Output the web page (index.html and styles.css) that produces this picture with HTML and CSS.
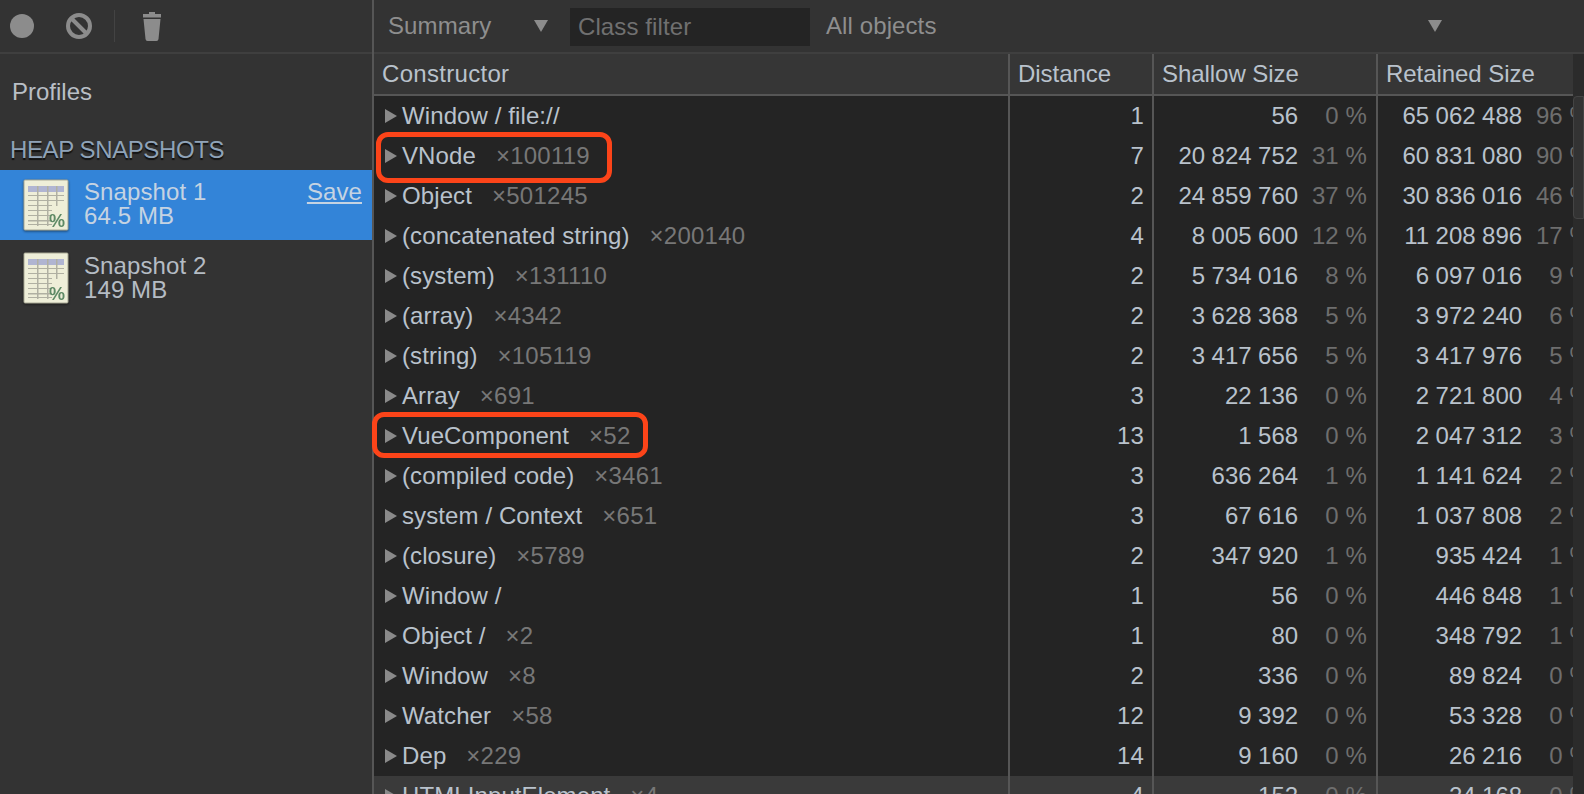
FILE: index.html
```html
<!DOCTYPE html>
<html lang="en">
<head>
<meta charset="utf-8">
<title>Profiles</title>
<link rel="stylesheet" href="styles.css">
</head>
<body>
<svg class="defs" width="0" height="0" aria-hidden="true">
  <defs>
    <symbol id="sheet" viewBox="0 0 46 52">
      <rect x="1" y="1" width="44" height="50" rx="1" fill="#eeeed8" stroke="#a9a995" stroke-width="1"/>
      <rect x="5" y="7" width="36" height="6" fill="#b0b5d2"/>
      <g fill="#b0b0a2">
        <rect x="5" y="16" width="36" height="1"/><rect x="5" y="21" width="36" height="1"/><rect x="5" y="26" width="24" height="1"/>
        <rect x="5" y="31" width="24" height="1"/><rect x="5" y="36" width="24" height="1"/><rect x="5" y="41" width="24" height="1.5"/>
        <rect x="5" y="45" width="24" height="1"/>
        <rect x="14" y="7" width="1.5" height="40"/><rect x="24" y="7" width="1.5" height="40"/><rect x="33" y="7" width="1.500" height="20"/>
      </g>
      <text x="34" y="48" text-anchor="middle" class="pct-glyph">%</text>
    </symbol>
  </defs>
</svg>
<div class="app">
  <aside class="sidebar">
    <div class="side-toolbar">
      <svg class="rec" width="24" height="24" viewBox="0 0 24 24"><circle cx="12" cy="12" r="12" fill="#8c8c8c"/></svg>
      <svg class="clear" width="26" height="26" viewBox="0 0 26 26"><circle cx="13" cy="13" r="11" fill="none" stroke="#8c8c8c" stroke-width="4"/><path d="M5.500 5.500L20.500 20.500" stroke="#8c8c8c" stroke-width="4"/></svg>
      <span class="tool-sep"></span>
      <svg class="trash" width="20" height="29" viewBox="0 0 20 29"><path d="M7 0h6v2h6v3.500H1V2h6z" fill="#8c8c8c"/><path d="M1.500 7h17l-2 20q-.2 2-2 2h-9q-1.800 0-2-2z" fill="#8c8c8c"/></svg>
    </div>
    <div class="profiles">Profiles</div>
    <div class="group">HEAP SNAPSHOTS</div>
    <div class="snap snap-on">
      <svg class="sheet" width="46" height="52"><use href="#sheet"/></svg>
      <div class="snap-text"><div>Snapshot 1</div><div>64.5 MB</div></div>
      <a class="save">Save</a>
    </div>
    <div class="snap">
      <svg class="sheet" width="46" height="52"><use href="#sheet"/></svg>
      <div class="snap-text"><div>Snapshot 2</div><div>149 MB</div></div>
    </div>
  </aside>
  <main class="main">
    <div class="filterbar">
      <span class="sel-summary">Summary</span>
      <span class="tri tri-a"></span>
      <span class="filter">Class filter</span>
      <span class="sel-all">All objects</span>
      <span class="tri"></span>
    </div>
    <div class="body">
      <div class="table">
        <div class="row head">
          <div class="c-name">Constructor</div>
          <div class="c-dist">Distance</div>
          <div class="c-shal">Shallow Size</div>
          <div class="c-ret">Retained Size</div>
        </div>
        <div class="row"><div class="c-name"><i></i>Window / file://</div><div class="c-dist">1</div><div class="c-shal"><b>56</b><em>0 %</em></div><div class="c-ret"><b>65 062 488</b><em>96 %</em></div></div>
        <div class="row"><div class="c-name"><i></i>VNode<span>×100119</span></div><div class="c-dist">7</div><div class="c-shal"><b>20 824 752</b><em>31 %</em></div><div class="c-ret"><b>60 831 080</b><em>90 %</em></div></div>
        <div class="row"><div class="c-name"><i></i>Object<span>×501245</span></div><div class="c-dist">2</div><div class="c-shal"><b>24 859 760</b><em>37 %</em></div><div class="c-ret"><b>30 836 016</b><em>46 %</em></div></div>
        <div class="row"><div class="c-name"><i></i>(concatenated string)<span>×200140</span></div><div class="c-dist">4</div><div class="c-shal"><b>8 005 600</b><em>12 %</em></div><div class="c-ret"><b>11 208 896</b><em>17 %</em></div></div>
        <div class="row"><div class="c-name"><i></i>(system)<span>×131110</span></div><div class="c-dist">2</div><div class="c-shal"><b>5 734 016</b><em>8 %</em></div><div class="c-ret"><b>6 097 016</b><em>9 %</em></div></div>
        <div class="row"><div class="c-name"><i></i>(array)<span>×4342</span></div><div class="c-dist">2</div><div class="c-shal"><b>3 628 368</b><em>5 %</em></div><div class="c-ret"><b>3 972 240</b><em>6 %</em></div></div>
        <div class="row"><div class="c-name"><i></i>(string)<span>×105119</span></div><div class="c-dist">2</div><div class="c-shal"><b>3 417 656</b><em>5 %</em></div><div class="c-ret"><b>3 417 976</b><em>5 %</em></div></div>
        <div class="row"><div class="c-name"><i></i>Array<span>×691</span></div><div class="c-dist">3</div><div class="c-shal"><b>22 136</b><em>0 %</em></div><div class="c-ret"><b>2 721 800</b><em>4 %</em></div></div>
        <div class="row"><div class="c-name"><i></i>VueComponent<span>×52</span></div><div class="c-dist">13</div><div class="c-shal"><b>1 568</b><em>0 %</em></div><div class="c-ret"><b>2 047 312</b><em>3 %</em></div></div>
        <div class="row"><div class="c-name"><i></i>(compiled code)<span>×3461</span></div><div class="c-dist">3</div><div class="c-shal"><b>636 264</b><em>1 %</em></div><div class="c-ret"><b>1 141 624</b><em>2 %</em></div></div>
        <div class="row"><div class="c-name"><i></i>system / Context<span>×651</span></div><div class="c-dist">3</div><div class="c-shal"><b>67 616</b><em>0 %</em></div><div class="c-ret"><b>1 037 808</b><em>2 %</em></div></div>
        <div class="row"><div class="c-name"><i></i>(closure)<span>×5789</span></div><div class="c-dist">2</div><div class="c-shal"><b>347 920</b><em>1 %</em></div><div class="c-ret"><b>935 424</b><em>1 %</em></div></div>
        <div class="row"><div class="c-name"><i></i>Window /</div><div class="c-dist">1</div><div class="c-shal"><b>56</b><em>0 %</em></div><div class="c-ret"><b>446 848</b><em>1 %</em></div></div>
        <div class="row"><div class="c-name"><i></i>Object /<span>×2</span></div><div class="c-dist">1</div><div class="c-shal"><b>80</b><em>0 %</em></div><div class="c-ret"><b>348 792</b><em>1 %</em></div></div>
        <div class="row"><div class="c-name"><i></i>Window<span>×8</span></div><div class="c-dist">2</div><div class="c-shal"><b>336</b><em>0 %</em></div><div class="c-ret"><b>89 824</b><em>0 %</em></div></div>
        <div class="row"><div class="c-name"><i></i>Watcher<span>×58</span></div><div class="c-dist">12</div><div class="c-shal"><b>9 392</b><em>0 %</em></div><div class="c-ret"><b>53 328</b><em>0 %</em></div></div>
        <div class="row"><div class="c-name"><i></i>Dep<span>×229</span></div><div class="c-dist">14</div><div class="c-shal"><b>9 160</b><em>0 %</em></div><div class="c-ret"><b>26 216</b><em>0 %</em></div></div>
        <div class="row row-hover"><div class="c-name"><i></i>HTMLInputElement<span>×4</span></div><div class="c-dist">4</div><div class="c-shal"><b>152</b><em>0 %</em></div><div class="c-ret"><b>24 168</b><em>0 %</em></div></div>
      </div>
      <div class="scroll"><div class="thumb"></div></div>
      <div class="mark mark-a"></div>
      <div class="mark mark-b"></div>
    </div>
  </main>
</div>
</body>
</html>
```
FILE: styles.css
```css
* { box-sizing: border-box; }
html, body { margin: 0; height: 100%; overflow: hidden; background: #333; }
body { font: 24px/40px "Liberation Sans", Arial, sans-serif; letter-spacing: .1px; color: #b9c2cc; }
.defs { position: absolute; }
.pct-glyph { font: bold 18px "Liberation Sans", sans-serif; fill: #5f8a66; letter-spacing: 0; }

.app { display: flex; height: 794px; overflow: hidden; }

.sidebar { width: 374px; flex: none; background: #333; border-right: 2px solid #565656; }
.side-toolbar { height: 54px; display: flex; align-items: center; padding: 0 0 0 10px; border-bottom: 2px solid #3f3f3f; }
.rec { margin-right: 32px; }
.clear { margin-right: 22px; }
.tool-sep { width: 1px; height: 32px; background: #434343; margin-right: 27px; }

.profiles { padding-left: 12px; height: 40px; margin-top: 18px; color: #b9bfc6; letter-spacing: 0; }
.group { padding-left: 10px; margin-top: 18px; height: 40px; color: #8fa3b8; text-shadow: 0 2px 1px #111; letter-spacing: -.4px; }
.snap { height: 70px; display: flex; align-items: center; padding: 0 12px 0 23px; color: #b5bcc4; }
.snap + .snap { margin-top: 3px; }
.snap-on { background: #3384d8; color: #c5d3e2; }
.snap-on .snap-text { margin-top: -2px; }
.sheet { flex: none; filter: drop-shadow(0 1px 1px rgba(0,0,0,.5)) blur(.4px); }
.snap-text { margin-left: 15px; line-height: 24px; flex: 1; }
.save { align-self: flex-start; margin-top: 4px; margin-right: -2px; line-height: 36px; text-decoration: underline; }

.main { flex: 1; min-width: 0; display: flex; flex-direction: column; }
.filterbar { height: 54px; flex: none; display: flex; align-items: center; background: #333; border-bottom: 2px solid #3f3f3f; padding-left: 14px; color: #8e8e8e; }
.sel-summary { width: 148px; }
.tri { width: 0; height: 0; border-left: 7px solid transparent; border-right: 7px solid transparent; border-top: 12px solid #8c8c8c; }
.tri-a { margin-right: 22px; margin-left: -2px; }
.filter { width: 240px; height: 38px; line-height: 38px; background: #242424; padding-left: 8px; color: #707070; margin: 2px 16px 0 0; }
.sel-all { width: 602px; }

.body { flex: 1; min-height: 0; display: flex; position: relative; }
.table { width: 1199px; flex: none; background: #242424; overflow: hidden; }

.row { display: grid; grid-template-columns: 634px 144px 224px 197px; height: 40px; }
.row > div { border-left: 2px solid #565656; overflow: hidden; white-space: nowrap; }
.row > .c-name { border-left: 0; }
.head { height: 42px; background: #363636; border-bottom: 2px solid #565656; }
.row-hover { background: #3a3a3a; }

.c-name { padding-left: 8px; display: flex; align-items: center; }
.head .c-dist, .head .c-shal, .head .c-ret { padding-left: 8px; letter-spacing: -.05px; }
.head .c-name { letter-spacing: .3px; }
.row:not(.head) .c-dist { text-align: right; padding-right: 8px; }
.c-name span { margin-left: 20px; color: #777; letter-spacing: .25px; }
.c-name i { width: 0; height: 0; margin: 0 5px 0 3px; border-top: 7px solid transparent; border-bottom: 7px solid transparent; border-left: 12px solid #8a8a8a; flex: none; }

.row:not(.head) .c-shal { display: grid; grid-template-columns: 1fr 69px; padding-right: 9px; }
.row:not(.head) .c-ret { display: grid; grid-template-columns: 144px 69px; }
.c-shal b, .c-ret b { font-weight: 400; text-align: right; letter-spacing: -.05px; }
.c-shal em, .c-ret em { font-style: normal; text-align: right; color: #6e6e6e; }

.mark { position: absolute; border: 5px solid #fc4419; border-radius: 12px; pointer-events: none; }
.mark-a { left: 2px; top: 78px; width: 236px; height: 51px; }
.mark-b { left: -2px; top: 358px; width: 276px; height: 46px; }

.scroll { flex: 1; background: #2b2b2b; }
.thumb { height: 123px; margin-top: 42px; background: #333; border: 1px solid #444; border-radius: 4px 0 0 4px; }
```
